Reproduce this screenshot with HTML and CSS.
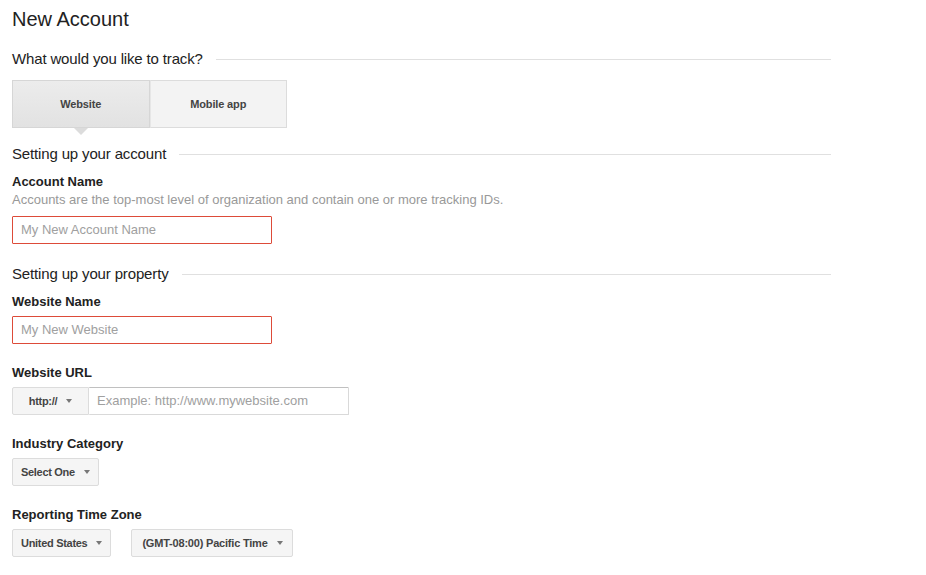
FILE: index.html
```html
<!DOCTYPE html>
<html lang="en">
<head>
  <meta charset="UTF-8">
  <meta name="viewport" content="width=device-width, initial-scale=1.0">
  <title>New Account</title>
  <link rel="stylesheet" href="styles.css">
</head>
<body>
  <div class="page">
    <h1 class="title">New Account</h1>

    <!-- What to track -->
    <div class="section-head"><span>What would you like to track?</span></div>
    <div class="toggle">
      <button class="toggle-btn active">Website</button>
      <button class="toggle-btn">Mobile app</button>
    </div>

    <!-- Account -->
    <div class="section-head"><span>Setting up your account</span></div>
    <div class="field first">
      <div class="label">Account Name</div>
      <div class="help">Accounts are the top-most level of organization and contain one or more tracking IDs.</div>
      <input type="text" class="text-input error" placeholder="My New Account Name">
    </div>

    <!-- Property -->
    <div class="section-head"><span>Setting up your property</span></div>
    <div class="field first">
      <div class="label">Website Name</div>
      <input type="text" class="text-input error" placeholder="My New Website">
    </div>

    <div class="field">
      <div class="label">Website URL</div>
      <div class="url-group">
        <button class="select-btn protocol">http://<span class="caret"></span></button>
        <input type="text" class="text-input url" placeholder="Example: http://www.mywebsite.com">
      </div>
    </div>

    <div class="field">
      <div class="label">Industry Category</div>
      <button class="select-btn">Select One<span class="caret"></span></button>
    </div>

    <div class="field">
      <div class="label">Reporting Time Zone</div>
      <div class="row">
        <button class="select-btn">United States<span class="caret"></span></button>
        <button class="select-btn wide">(GMT-08:00) Pacific Time<span class="caret"></span></button>
      </div>
    </div>
  </div>
</body>
</html>
```

FILE: styles.css
```css
/* Page basics */
body {
  margin: 0;
  font-family: "Liberation Sans", Arial, sans-serif;
  color: #222;
  background: #fff;
}

.page {
  width: 819px;
  margin-left: 12px;
}

.title {
  margin: 7px 0 0;
  font-size: 20px;
  line-height: 24px;
  font-weight: normal;
  color: #222;
}

/* Section headings with a rule to the right */
.section-head {
  display: flex;
  align-items: center;
  margin-top: 18px;
  font-size: 15px;
  line-height: 20px;
  letter-spacing: -0.15px;
  color: #222;
}

.section-head span {
  white-space: nowrap;
  padding-right: 13px;
}

.section-head::after {
  content: "";
  flex: 1;
  height: 1px;
  background: #e0e0e0;
}

/* Website / Mobile app toggle */
.toggle {
  display: flex;
  width: 275px;
  margin-top: 11px;
}

.toggle + .section-head {
  margin-top: 16px;
}

.toggle-btn {
  position: relative;
  flex: 1;
  height: 48px;
  padding: 0;
  border: 1px solid #dcdcdc;
  background: #f3f3f3;
  font-family: inherit;
  font-size: 11px;
  font-weight: bold;
  letter-spacing: -0.15px;
  color: #444;
  cursor: pointer;
}

.toggle-btn + .toggle-btn {
  border-left: 1px solid #e6e6e6;
}

.toggle-btn.active {
  background: linear-gradient(#ececec, #e2e2e2);
  border-color: #d6d6d6;
}

.toggle-btn.active::after {
  content: "";
  position: absolute;
  left: 50%;
  bottom: -8px;
  margin-left: -7px;
  border-left: 7px solid transparent;
  border-right: 7px solid transparent;
  border-top: 7px solid #dcdcdc;
}

/* Form fields */
.field {
  margin-top: 20px;
}

.field.first {
  margin-top: 8.5px;
}

.label {
  font-size: 13px;
  line-height: 18px;
  font-weight: bold;
  color: #222;
  margin-bottom: 5px;
}

.help {
  font-size: 13px;
  line-height: 18px;
  color: #999;
  margin-top: -5px;
  margin-bottom: 7px;
}

.field + .section-head {
  margin-top: 20.5px;
}

.text-input {
  display: block;
  box-sizing: border-box;
  width: 260px;
  height: 28px;
  padding: 0 8px;
  border: 1px solid #d9d9d9;
  border-top-color: #c0c0c0;
  border-radius: 1px;
  font-family: inherit;
  font-size: 13px;
  color: #222;
  outline: none;
}

.text-input::placeholder {
  color: #a0a0a0;
}

.text-input.error {
  border-color: #dd4b39;
}

/* URL input with protocol dropdown */
.url-group {
  display: flex;
}

.text-input.url {
  width: 260px;
  border-left: none;
}

/* Dropdown buttons */
.select-btn {
  display: inline-flex;
  align-items: center;
  box-sizing: border-box;
  height: 28px;
  padding: 0 8px 0 8px;
  border: 1px solid #dcdcdc;
  border-radius: 2px;
  background: #f5f5f5;
  font-family: inherit;
  font-size: 11px;
  font-weight: bold;
  letter-spacing: -0.3px;
  color: #444;
  cursor: pointer;
}

.select-btn.wide {
  padding: 0 9px 0 10px;
  letter-spacing: -0.2px;
}

.select-btn.protocol {
  width: 77px;
  justify-content: center;
  padding: 0;
  border-radius: 2px 0 0 2px;
}

.caret {
  display: inline-block;
  width: 0;
  height: 0;
  margin-left: 9px;
  border-left: 3.5px solid transparent;
  border-right: 3.5px solid transparent;
  border-top: 4px solid #777;
}

.row {
  display: flex;
  gap: 20px;
}
```
